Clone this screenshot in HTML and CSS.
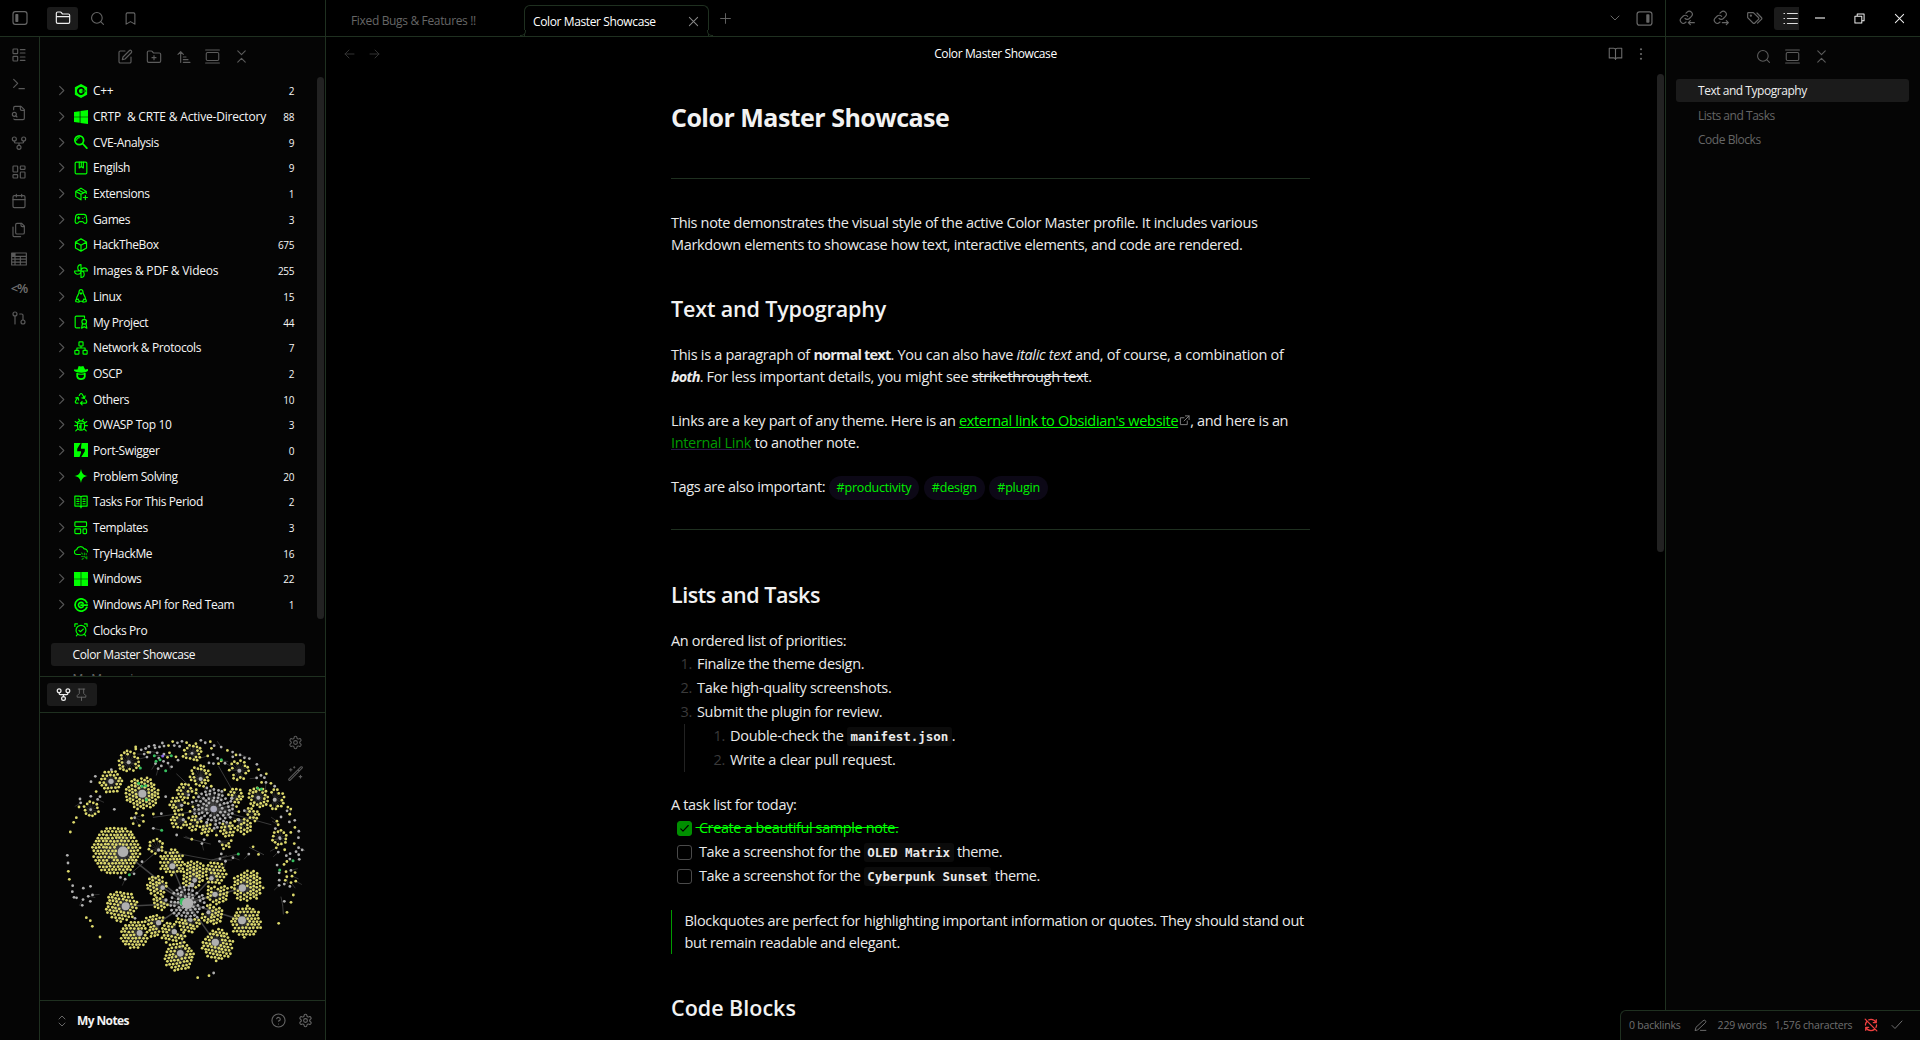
FILE: index.html
```html
<!DOCTYPE html>
<html lang="en">
<head>
<meta charset="utf-8">
<title>Color Master Showcase</title>
<link rel="stylesheet" href="styles.css">
</head>
<body>
<svg class="sprite" aria-hidden="true">
  <symbol id="panel" viewBox="0 0 24 24"><rect x="1.5" y="2.5" width="21" height="19" rx="3.5"/><rect class="fill" x="5" y="6" width="4.5" height="12" rx="1"/></symbol>
  <symbol id="panel-r" viewBox="0 0 24 24"><rect x="1.5" y="2.5" width="21" height="19" rx="3.5"/><rect class="fill" x="14.5" y="6" width="4.5" height="12" rx="1"/></symbol>
  <symbol id="folder" viewBox="0 0 24 24"><path d="M4 20h16a2 2 0 0 0 2-2V8a2 2 0 0 0-2-2h-7.9a2 2 0 0 1-1.7-.9l-.8-1.2A2 2 0 0 0 7.900 3H4a2 2 0 0 0-2 2v13c0 1.100.9 2 2 2ZM2 10h20"/></symbol>
  <symbol id="search" viewBox="0 0 24 24"><circle cx="11" cy="11" r="8.500"/><path d="m21.500 21.500-4.400-4.400"/></symbol>
  <symbol id="bookmark" viewBox="0 0 24 24"><path d="m19 21-7-4-7 4V5a2 2 0 0 1 2-2h10a2 2 0 0 1 2 2v16z"/></symbol>
  <symbol id="list-layout" viewBox="0 0 24 24"><rect x="3" y="3" width="7" height="7" rx="1"/><rect x="3" y="14" width="7" height="7" rx="1"/><path d="M14 4h7M14 9h7M14 15h7M14 20h7"/></symbol>
  <symbol id="terminal" viewBox="0 0 24 24"><path d="m4 17 6-6-6-6M12 19h8"/></symbol>
  <symbol id="file-search" viewBox="0 0 24 24"><path d="M14 2v4a2 2 0 0 0 2 2h4"/><path d="M4.270 21A2 2 0 0 0 6 22h12a2 2 0 0 0 2-2V7l-5-5H6a2 2 0 0 0-2 2v3"/><circle cx="5" cy="14" r="3"/><path d="m9 18-1.500-1.500"/></symbol>
  <symbol id="fork" viewBox="0 0 24 24"><circle cx="12" cy="18.500" r="3"/><circle cx="5" cy="6" r="3"/><circle cx="19" cy="6" r="3"/><path d="M19 9v1c0 1-.6 2-2 2H7c-1.400 0-2-1-2-2V9M12 12v3.500"/></symbol>
  <symbol id="dashboard" viewBox="0 0 24 24"><rect x="3" y="3" width="7" height="9" rx="1"/><rect x="14" y="3" width="7" height="5" rx="1"/><rect x="14" y="12" width="7" height="9" rx="1"/><rect x="3" y="16" width="7" height="5" rx="1"/></symbol>
  <symbol id="calendar" viewBox="0 0 24 24"><rect x="3" y="4" width="18" height="18" rx="2"/><path d="M16 2v4M8 2v4M3 10h18"/></symbol>
  <symbol id="files" viewBox="0 0 24 24"><path d="M20 7h-3a2 2 0 0 1-2-2V2"/><path d="M9 18a2 2 0 0 1-2-2V4a2 2 0 0 1 2-2h7l4 4v10a2 2 0 0 1-2 2Z"/><path d="M3 7.600v12.800A1.600 1.600 0 0 0 4.600 22h9.800"/></symbol>
  <symbol id="table" viewBox="0 0 24 24"><path d="M1 3h22v18H1zM1 8h22M1 12.300h22M1 16.600h22M6 3v18M14 8v13"/><path class="fill" d="M1 3h5v5H1z"/></symbol>
  <symbol id="pull" viewBox="0 0 24 24"><circle cx="18" cy="18" r="3"/><circle cx="6" cy="6" r="3"/><path d="M13 6h3a2 2 0 0 1 2 2v7M6 9v12"/></symbol>
  <symbol id="pen-box" viewBox="0 0 24 24"><path d="M12 3H5a2 2 0 0 0-2 2v14a2 2 0 0 0 2 2h14a2 2 0 0 0 2-2v-7"/><path d="M18.400 2.600a2.100 2.100 0 0 1 3 3L12 15l-4 1 1-4Z"/></symbol>
  <symbol id="folder-plus" viewBox="0 0 24 24"><path d="M4 20h16a2 2 0 0 0 2-2V8a2 2 0 0 0-2-2h-7.900a2 2 0 0 1-1.700-.9l-.8-1.200A2 2 0 0 0 7.900 3H4a2 2 0 0 0-2 2v13c0 1.100.9 2 2 2ZM12 10v6M9 13h6"/></symbol>
  <symbol id="sort" viewBox="0 0 24 24"><path d="m3 8 4-4 4 4M7 4v16M11 12h4M11 16h7M11 20h10"/></symbol>
  <symbol id="gallery" viewBox="0 0 24 24"><path d="M1 1.500h22M1 22.500h22"/><rect x="2" y="5.500" width="20" height="13" rx="2"/></symbol>
  <symbol id="collapse" viewBox="0 0 24 24"><path d="m6 21 6-6 6 6M6 3l6 6 6-6"/></symbol>
  <symbol id="updown" viewBox="0 0 24 24"><path d="m6 16 6 6 6-6M6 8l6-6 6 6"/></symbol>
  <symbol id="chev" viewBox="0 0 24 24"><path d="m8 3 9 9-9 9"/></symbol>
  <symbol id="chev-d" viewBox="0 0 24 24"><path d="m4 8 8 8 8-8"/></symbol>
  <symbol id="x" viewBox="0 0 24 24"><path d="M3 3l18 18M21 3 3 21"/></symbol>
  <symbol id="plus" viewBox="0 0 24 24"><path d="M12 3v18M3 12h18"/></symbol>
  <symbol id="left" viewBox="0 0 24 24"><path d="m12 20-8-8 8-8M4 12h18"/></symbol>
  <symbol id="right" viewBox="0 0 24 24"><path d="m12 4 8 8-8 8M20 12H2"/></symbol>
  <symbol id="book" viewBox="0 0 24 24"><path d="M12 6v15.500M12 6c0-1.500-1-2.500-3-2.500H2v15.500h7c2 0 3 1 3 2.500 0-1.500 1-2.500 3-2.500h7V3.500h-7c-2 0-3 1-3 2.500z"/></symbol>
  <symbol id="dots" viewBox="0 0 24 24"><circle class="fill" cx="12" cy="2.500" r="2.200"/><circle class="fill" cx="12" cy="12" r="2.200"/><circle class="fill" cx="12" cy="21.500" r="2.200"/></symbol>
  <symbol id="link-in" viewBox="0 0 24 24"><path d="M9 12.500a4.500 4.500 0 0 0 6.500.3l3.200-3.200a4.600 4.600 0 0 0-6.500-6.500L10.500 4.800M13 9.500a4.500 4.500 0 0 0-6.500-.5l-3.300 3.300a4.600 4.600 0 0 0 6.500 6.500l.8-.8M23 19h-9M17 16l-3 3 3 3"/></symbol>
  <symbol id="link-out" viewBox="0 0 24 24"><path d="M9 12.500a4.500 4.500 0 0 0 6.500.3l3.200-3.200a4.600 4.600 0 0 0-6.500-6.500L10.500 4.800M13 9.500a4.500 4.500 0 0 0-6.500-.5l-3.300 3.300a4.600 4.600 0 0 0 6.500 6.500l.8-.8M14 19h9M20 16l3 3-3 3"/></symbol>
  <symbol id="tags" viewBox="0 0 24 24"><path d="M1 5v6.500l8 8a2 2 0 0 0 2.800 0l5.400-5.400a2 2 0 0 0 0-2.800L9.500 4H2a1 1 0 0 0-1 1zM15 4.500l6.600 6.700a2 2 0 0 1 0 2.800l-5.800 5.800"/><circle cx="5.800" cy="8.500" r=".8"/></symbol>
  <symbol id="list" viewBox="0 0 24 24"><path d="M7 4h16M7 12h16M7 20h16M1.500 4h1M1.500 12h1M1.500 20h1"/></symbol>
  <symbol id="restore" viewBox="0 0 24 24"><path d="M2 7h15v15H2zM7 7V2h15v15h-5"/></symbol>
  <symbol id="pin" viewBox="0 0 24 24"><path d="M12 17v6M6 2h12M8 2v8l-4 4v3h16v-3l-4-4V2"/></symbol>
  <symbol id="gear" viewBox="0 0 24 24"><path d="M12.200 2h-.4a2 2 0 0 0-2 2v.2a2 2 0 0 1-1 1.700l-.4.300a2 2 0 0 1-2 0l-.2-.1a2 2 0 0 0-2.700.7l-.2.400a2 2 0 0 0 .7 2.700l.2.100a2 2 0 0 1 1 1.700v.5a2 2 0 0 1-1 1.800l-.2.100a2 2 0 0 0-.7 2.700l.2.400a2 2 0 0 0 2.700.7l.2-.1a2 2 0 0 1 2 0l.4.300a2 2 0 0 1 1 1.700v.2a2 2 0 0 0 2 2h.4a2 2 0 0 0 2-2v-.2a2 2 0 0 1 1-1.700l.4-.3a2 2 0 0 1 2 0l.2.100a2 2 0 0 0 2.700-.7l.2-.4a2 2 0 0 0-.7-2.700l-.2-.1a2 2 0 0 1-1-1.800v-.5a2 2 0 0 1 1-1.700l.2-.1a2 2 0 0 0 .7-2.700l-.2-.4a2 2 0 0 0-2.700-.7l-.2.100a2 2 0 0 1-2 0l-.4-.3a2 2 0 0 1-1-1.700V4a2 2 0 0 0-2-2z"/><circle cx="12" cy="12" r="3"/></symbol>
  <symbol id="wand" viewBox="0 0 24 24"><path d="M1.500 20.500 20.500 1.500a1.300 1.300 0 0 1 2 2L3.500 22.500a1.300 1.300 0 0 1-2-2zM16 6l2 2M4.500 4v4M2.500 6h4M20 15v4M18 17h4M10 1v2M9 2h2"/></symbol>
  <symbol id="help" viewBox="0 0 24 24"><circle cx="12" cy="12" r="10.500"/><path d="M9.100 9a3 3 0 0 1 5.800 1c0 2-3 3-3 3M12 17.500v.1"/></symbol>
  <symbol id="pen-line" viewBox="0 0 24 24"><path d="M12 21h10M17 3a2.500 2.500 0 0 1 4 4L7 20l-5 1.500L3.500 16z"/></symbol>
  <symbol id="sync-off" viewBox="0 0 24 24"><path d="M2 2l20 20M21 8h-5M21 3v5c-2-3.500-5-5.500-9-5.500-1.500 0-2.500.3-3.800.8M5 6c-1.500 1.600-2.500 3.700-2.500 6M3 16h5M3 21v-5c2 3.500 5 5.500 9 5.500 2.500 0 4.500-.8 6-2M21.500 12c0 1.500-.3 2.800-1 4"/></symbol>
  <symbol id="check" viewBox="0 0 24 24"><path d="m2 13 6 6L22 4"/></symbol>
  <symbol id="ext" viewBox="0 0 24 24"><path d="M14 2h8v8M22 2 11 13M18 13v8H3V6h8"/></symbol>

  <symbol id="cpp" viewBox="0 0 24 24"><path class="fill" d="M12 0l10.500 5.500v13L12 24 1.500 18.500v-13z"/><path class="cut thick" d="M16.600 9.300A5.300 5.300 0 1 0 16.600 14.700"/><path class="cut" d="M14 12h6"/></symbol>
  <symbol id="win10" viewBox="0 0 24 24"><path class="fill" d="M0 3.400 9.800 2v9.500H0zM11 1.800 24 0v11.500H11zM0 12.600h9.800V22L0 20.600zM11 12.600h13V24l-13-1.800z"/></symbol>
  <symbol id="win11" viewBox="0 0 24 24"><path class="fill" d="M0 0h11.500v11.500H0zM12.500 0H24v11.500H12.500zM0 12.500h11.500V24H0zM12.500 12.500H24V24H12.500z"/></symbol>
  <symbol id="lens" viewBox="0 0 24 24"><circle class="heavy" cx="9" cy="9" r="7.500"/><path class="heavy" d="m15 15 7 7.500"/><path d="M4.500 9A4.500 4.500 0 0 1 9 4.500"/></symbol>
  <symbol id="notebook" viewBox="0 0 24 24"><rect x="2" y="2" width="20" height="20" rx="2"/><path d="M9 2v10l3.500-2.500L16 12V2M12.500 2v7"/></symbol>
  <symbol id="package" viewBox="0 0 24 24"><path d="M21 11V7.500L12 2 3 7.500v9L12 22M3 7.500l9 5 9-5M12 12.500V22M7.500 5l9 5M16 18h7M19.500 14.500v7"/></symbol>
  <symbol id="game" viewBox="0 0 24 24"><path d="M6 10h4M8 8v4M15 11h.1M18 9h.1M17 4H7a4 4 0 0 0-4 3.600C2.500 11 2 14 2 16.500 2 18 3 19.500 5 19.500c1 0 1.500-.5 2-1l1.500-1.500a2 2 0 0 1 1.400-.6h4.200a2 2 0 0 1 1.400.6l1.500 1.500c.5.500 1 1 2 1 2 0 3-1.500 3-3 0-2.500-.5-5.500-1-8.900A4 4 0 0 0 17 4z"/></symbol>
  <symbol id="box" viewBox="0 0 24 24"><path d="M12 1.500 21.500 7v10L12 22.500 2.500 17V7zM2.500 7l9.500 5.500L21.500 7M12 12.500v10"/></symbol>
  <symbol id="fan" viewBox="0 0 24 24"><path d="M12 12V1C8.500 1 6.500 3.500 6.500 6.500S9 12 12 12zM12 12h11c0-3.500-2.500-5.500-5.500-5.500S12 9 12 12zM12 12v11c3.500 0 5.500-2.500 5.500-5.500S15 12 12 12zM12 12H1c0 3.500 2.500 5.500 5.500 5.500S12 15 12 12z"/></symbol>
  <symbol id="tux" viewBox="0 0 24 24"><path d="M12 1C9 1 8.500 3 8.500 6S4 13 4 18M12 1c3 0 3.500 2 3.500 5s4.500 7 4.500 12M10.500 7h3L12 9zM3 19l4-2 2.500 5c-3 1.500-5-.5-6.500-.500zM21 19l-4-2-2.500 5c3 1.500 5-.5 6.500-.500zM9.500 21h5"/></symbol>
  <symbol id="project" viewBox="0 0 24 24"><path d="M10 22H4a2 2 0 0 1-2-2V4a2 2 0 0 1 2-2h14v3"/><circle cx="17.500" cy="11.500" r="4"/><path d="m14.500 15-1.500 7.500 4.500-2.500 4.500 2.500-1.500-7.500"/></symbol>
  <symbol id="network" viewBox="0 0 24 24"><rect x="8.500" y="1.500" width="7" height="7" rx="1"/><rect x="1.500" y="16" width="7" height="6.500" rx="1"/><rect x="15.500" y="16" width="7" height="6.500" rx="1"/><path d="M12 8.500V12M5 16v-4h14v4"/></symbol>
  <symbol id="spy" viewBox="0 0 24 24"><path class="fill" d="M6 6 8 0l4 1 4-1 3 6 5-1v3c-3 4-17 5-24 0V6z"/><path d="M5.500 13v5c1.500 6 11.500 6 13 0v-5" class="heavy"/><path class="fill" d="M5 12c5 1.500 9 1.500 14 0v3H5z"/></symbol>
  <symbol id="recycle" viewBox="0 0 24 24"><path d="M7 19H4a2 2 0 0 1-1.500-3l4-7M11 19h9a2 2 0 0 0 1.500-3l-1.500-2.500M14 16l-3 3 3 3M8 14 7 9l-4.500 1.200M9 6l1.500-2.500a2 2 0 0 1 3.300 0L18 10.500M13.500 10l4.500 1 1-4.500"/></symbol>
  <symbol id="bug" viewBox="0 0 24 24"><path d="M8 2l2 3M16 2l-2 3M6 9c0-2.500 2-4 6-4s6 1.500 6 4v6a6 6 0 0 1-12 0zM6 9h12M12 9v12M6 13H1M23 13h-5M6 9 2 6M18 9l4-3M7 18l-4 4M17 18l4 4M10 13v4"/></symbol>
  <symbol id="port" viewBox="0 0 24 24"><path class="fill" fill-rule="evenodd" d="M0 0h11.500L5.500 10v4H12v2.500L9.500 24H0zM13 0h11v24H12.500l6-10v-4H12V7.500z"/></symbol>
  <symbol id="spark" viewBox="0 0 24 24"><path class="fill" d="M12 0c1.500 8 4 10.500 11.500 12C16 13.500 13.500 16 12 24 10.500 16 8 13.500.5 12 8 10.500 10.500 8 12 0z"/></symbol>
  <symbol id="reader" viewBox="0 0 24 24"><path d="M12 4v18M12 4c0-1-1-2-3-2H1.500v17H9c2 0 3 1 3 2.500 0-1.500 1-2.500 3-2.500h7.500V2H15c-2 0-3 1-3 2zM5 7h3.500M5 11h3.500M5 15h3.500M15.500 7H19M15.500 11H19M15.500 15H19"/></symbol>
  <symbol id="template" viewBox="0 0 24 24"><rect x="1.500" y="1.500" width="20" height="8" rx="1.500"/><rect x="1.500" y="13.500" width="10" height="8" rx="1.500"/><rect x="15.500" y="13.500" width="6" height="8" rx="1.500"/></symbol>
  <symbol id="cloud" viewBox="0 0 24 24"><path d="M11 14.500H5A4 4 0 0 1 4.500 6.500 7 7 0 0 1 17.500 5 5 5 0 0 1 23 10"/><path class="faint" d="M13 12l2 2M13 18h3M18 12v3M18 18l4 4M22 18v4M14 23l2-2M21 13v2"/></symbol>
  <symbol id="cring" viewBox="0 0 24 24"><path class="heavy" d="M22 8A10.500 10.500 0 1 0 22 16"/><path class="heavy" d="M15.500 9A4.500 4.500 0 1 0 15.500 15"/><path class="heavy" d="M12 12h11"/></symbol>
  <symbol id="alarm" viewBox="0 0 24 24"><circle cx="12" cy="12.500" r="8.500"/><path d="M1.500 6V1.500H6M22.500 6V1.500H18M4 22l2-2.500M20 22l-2-2.500M8.500 12.500l2.500 2.500 5-4.500"/></symbol>
</svg>

<div class="app">
  <header class="titlebar">
    <div class="tb-left">
      <svg class="i16"><use href="#panel"/></svg>
      <span class="tb-tab on"><svg class="i16"><use href="#folder"/></svg></span>
      <span class="tb-tab"><svg class="i15"><use href="#search"/></svg></span>
      <span class="tb-tab"><svg class="i15"><use href="#bookmark"/></svg></span>
    </div>
    <div class="tb-main">
      <span class="doc-tab"><span class="ui">Fixed Bugs &amp; Features !!</span></span>
      <span class="doc-tab active"><span class="ui">Color Master Showcase</span><svg class="i11"><use href="#x"/></svg></span>
      <svg class="i13 new-tab"><use href="#plus"/></svg>
      <svg class="i12 chev-menu"><use href="#chev-d"/></svg>
      <svg class="i17"><use href="#panel-r"/></svg>
    </div>
    <div class="tb-right">
      <div class="tb-icons">
        <svg class="i16"><use href="#link-in"/></svg>
        <svg class="i16"><use href="#link-out"/></svg>
        <svg class="i16"><use href="#tags"/></svg>
      </div>
      <span class="outline-tab"><svg class="i15"><use href="#list"/></svg></span>
      <div class="win">
        <i class="min"></i>
        <svg class="i11"><use href="#restore"/></svg>
        <svg class="i11"><use href="#x"/></svg>
      </div>
    </div>
  </header>

  <nav class="ribbon">
    <svg class="i16"><use href="#list-layout"/></svg>
    <svg class="i16"><use href="#terminal"/></svg>
    <svg class="i16"><use href="#file-search"/></svg>
    <svg class="i16"><use href="#fork"/></svg>
    <svg class="i16"><use href="#dashboard"/></svg>
    <svg class="i16"><use href="#calendar"/></svg>
    <svg class="i16"><use href="#files"/></svg>
    <svg class="i16"><use href="#table"/></svg>
    <span class="tpl">&lt;%</span>
    <svg class="i16"><use href="#pull"/></svg>
  </nav>

  <aside class="sidebar">
    <div class="tools">
      <svg class="i16"><use href="#pen-box"/></svg>
      <svg class="i16"><use href="#folder-plus"/></svg>
      <svg class="i16"><use href="#sort"/></svg>
      <svg class="i15"><use href="#gallery"/></svg>
      <svg class="i15"><use href="#collapse"/></svg>
    </div>
    <div class="tree-wrap">
      <ul class="tree">
        <li><svg class="tw"><use href="#chev"/></svg><svg class="fi"><use href="#cpp"/></svg><span class="ui">C++</span><em>2</em></li>
        <li><svg class="tw"><use href="#chev"/></svg><svg class="fi"><use href="#win10"/></svg><span class="ui wide">CRTP&nbsp; &amp; CRTE &amp; Active-Directory</span><em>88</em></li>
        <li><svg class="tw"><use href="#chev"/></svg><svg class="fi"><use href="#lens"/></svg><span class="ui">CVE-Analysis</span><em>9</em></li>
        <li><svg class="tw"><use href="#chev"/></svg><svg class="fi"><use href="#notebook"/></svg><span class="ui">Engilsh</span><em>9</em></li>
        <li><svg class="tw"><use href="#chev"/></svg><svg class="fi"><use href="#package"/></svg><span class="ui">Extensions</span><em>1</em></li>
        <li><svg class="tw"><use href="#chev"/></svg><svg class="fi"><use href="#game"/></svg><span class="ui">Games</span><em>3</em></li>
        <li><svg class="tw"><use href="#chev"/></svg><svg class="fi"><use href="#box"/></svg><span class="ui">HackTheBox</span><em>675</em></li>
        <li><svg class="tw"><use href="#chev"/></svg><svg class="fi"><use href="#fan"/></svg><span class="ui wide">Images &amp; PDF &amp; Videos</span><em>255</em></li>
        <li><svg class="tw"><use href="#chev"/></svg><svg class="fi"><use href="#tux"/></svg><span class="ui">Linux</span><em>15</em></li>
        <li><svg class="tw"><use href="#chev"/></svg><svg class="fi"><use href="#project"/></svg><span class="ui">My Project</span><em>44</em></li>
        <li><svg class="tw"><use href="#chev"/></svg><svg class="fi"><use href="#network"/></svg><span class="ui">Network &amp; Protocols</span><em>7</em></li>
        <li><svg class="tw"><use href="#chev"/></svg><svg class="fi"><use href="#spy"/></svg><span class="ui">OSCP</span><em>2</em></li>
        <li><svg class="tw"><use href="#chev"/></svg><svg class="fi"><use href="#recycle"/></svg><span class="ui">Others</span><em>10</em></li>
        <li><svg class="tw"><use href="#chev"/></svg><svg class="fi"><use href="#bug"/></svg><span class="ui">OWASP Top 10</span><em>3</em></li>
        <li><svg class="tw"><use href="#chev"/></svg><svg class="fi"><use href="#port"/></svg><span class="ui">Port-Swigger</span><em>0</em></li>
        <li><svg class="tw"><use href="#chev"/></svg><svg class="fi"><use href="#spark"/></svg><span class="ui">Problem Solving</span><em>20</em></li>
        <li><svg class="tw"><use href="#chev"/></svg><svg class="fi"><use href="#reader"/></svg><span class="ui">Tasks For This Period</span><em>2</em></li>
        <li><svg class="tw"><use href="#chev"/></svg><svg class="fi"><use href="#template"/></svg><span class="ui">Templates</span><em>3</em></li>
        <li><svg class="tw"><use href="#chev"/></svg><svg class="fi"><use href="#cloud"/></svg><span class="ui">TryHackMe</span><em>16</em></li>
        <li><svg class="tw"><use href="#chev"/></svg><svg class="fi"><use href="#win11"/></svg><span class="ui">Windows</span><em>22</em></li>
        <li><svg class="tw"><use href="#chev"/></svg><svg class="fi"><use href="#cring"/></svg><span class="ui">Windows API for Red Team</span><em>1</em></li>
        <li><i class="tw"></i><svg class="fi"><use href="#alarm"/></svg><span class="ui">Clocks Pro</span></li>
        <li class="file sel"><span class="ui">Color Master Showcase</span></li>
        <li class="file dim"><span class="ui">My Memories</span></li>
      </ul>
      <i class="thumb"></i>
    </div>
    <div class="graph-tabs"><span class="graph-tab"><svg class="i15 lit"><use href="#fork"/></svg><svg class="i13"><use href="#pin"/></svg></span></div>
    <div class="graph">
      <svg id="graph" viewBox="0 132 855 861"></svg>
      <div class="graph-tools"><svg class="i15"><use href="#gear"/></svg><svg class="i15"><use href="#wand"/></svg></div>
    </div>
    <footer class="vault">
      <svg class="i12"><use href="#updown"/></svg><strong>My Notes</strong>
      <svg class="i15"><use href="#help"/></svg><svg class="i15"><use href="#gear"/></svg>
    </footer>
  </aside>

  <main class="main">
    <div class="view-head">
      <div class="nav"><svg class="i12"><use href="#left"/></svg><svg class="i12"><use href="#right"/></svg></div>
      <span class="ui">Color Master Showcase</span>
      <div class="acts"><svg class="i15"><use href="#book"/></svg><svg class="i12"><use href="#dots"/></svg></div>
    </div>
    <div class="scroll">
      <article>
        <h1>Color Master Showcase</h1>
        <hr>
        <p>This note demonstrates the visual style of the active Color Master profile. It includes various<br>Markdown elements to showcase how text, interactive elements, and code are rendered.</p>
        <h2 class="h-text">Text and Typography</h2>
        <p>This is a paragraph of <strong>normal text</strong>. You can also have <i>italic text</i> and, of course, a combination of<br><strong><i>both</i></strong>. For less important details, you might see <s>strikethrough text</s>.</p>
        <p>Links are a key part of any theme. Here is an <a class="ext">external link to Obsidian's website</a><svg class="ext-i"><use href="#ext"/></svg>, and here is an<br><a class="int">Internal Link</a> to another note.</p>
        <p class="tags">Tags are also important: <span class="tag">#productivity</span><span class="tag">#design</span><span class="tag">#plugin</span></p>
        <hr class="hr2">
        <h2 class="h-lists">Lists and Tasks</h2>
        <p>An ordered list of priorities:</p>
        <ol>
          <li>Finalize the theme design.</li>
          <li>Take high-quality screenshots.</li>
          <li>Submit the plugin for review.
            <ol><li>Double-check the <code>manifest.json</code>.</li><li>Write a clear pull request.</li></ol>
          </li>
        </ol>
        <p>A task list for today:</p>
        <ul class="tasks">
          <li class="done"><span class="cb"><svg class="i9"><use href="#check"/></svg></span><s>&nbsp;Create a beautiful sample note.</s></li>
          <li><span class="cb"></span><span>&nbsp;Take a screenshot for the <code>OLED Matrix</code> theme.</span></li>
          <li><span class="cb"></span><span>&nbsp;Take a screenshot for the <code>Cyberpunk Sunset</code> theme.</span></li>
        </ul>
        <blockquote>Blockquotes are perfect for highlighting important information or quotes. They should stand out<br>but remain readable and elegant.</blockquote>
        <h2 class="h-code">Code Blocks</h2>
      </article>
      <i class="thumb"></i>
    </div>
  </main>

  <aside class="outline">
    <div class="tools">
      <svg class="i15"><use href="#search"/></svg>
      <svg class="i15"><use href="#gallery"/></svg>
      <svg class="i15"><use href="#collapse"/></svg>
    </div>
    <ul>
      <li class="on"><span class="ui">Text and Typography</span></li>
      <li><span class="ui">Lists and Tasks</span></li>
      <li><span class="ui">Code Blocks</span></li>
    </ul>
  </aside>

  <div class="status">
    <span>0 backlinks</span><svg class="i13"><use href="#pen-line"/></svg><span>229 words</span><span>1,576 characters</span><svg class="i14 red"><use href="#sync-off"/></svg><svg class="i12"><use href="#check"/></svg>
  </div>
</div>
<script src="graph.js"></script>
</body>
</html>
```
FILE: styles.css
```css
* { box-sizing: border-box; margin: 0; padding: 0; }
:root {
  --line: #1f3020;
  --side: #050505;
  --hover: #1b1b1b;
  --green: #00ff00;
}
body {
  width: 1920px; height: 1040px; overflow: hidden;
  background: #000; color: #eee;
  font-family: "Open Sans", "Noto Sans", sans-serif;
  font-size: 12px;
}
ul, ol { list-style: none; }
.sprite { display: none; }
svg { flex: none; fill: none; stroke: currentColor; stroke-width: 1.75; stroke-linecap: round; stroke-linejoin: round; overflow: visible; }
.fill { fill: currentColor; stroke: none; }
.heavy { stroke-width: 3; }
.cut { stroke: #050505; }
.thick { stroke-width: 3.2; }
.faint { opacity: 0.6; }
.i9 { width: 9px; height: 9px; stroke-width: 3; }
.i11 { width: 11px; height: 11px; stroke-width: 2.2; }
.i12 { width: 12px; height: 12px; stroke-width: 2; }
.i13 { width: 13px; height: 13px; }
.i14 { width: 14px; height: 14px; }
.i15 { width: 15px; height: 15px; }
.i16 { width: 16px; height: 16px; }
.i17 { width: 17px; height: 17px; }
.ui { font-size: 12px; letter-spacing: -0.38px; white-space: pre; }
.ui.wide { letter-spacing: -0.19px; }

.app {
  position: relative;
  width: 1920px; height: 1040px; overflow: hidden;
  display: grid;
  grid-template: 37px 1003px / 40px 286px 1340px 254px;
}
.titlebar { grid-column: 1 / -1; display: flex; border-bottom: 1px solid var(--line); color: #666; }
.tb-left { width: 326px; display: flex; align-items: center; padding-left: 12px; border-right: 1px solid var(--line); }
.tb-tab { width: 31px; height: 23px; margin-right: 2px; display: flex; align-items: center; justify-content: center; border-radius: 3px; }
.tb-tab.on { margin-left: 19px; margin-right: 4px; background: var(--hover); color: #eee; }
.tb-main { width: 1340px; display: flex; align-items: center; border-right: 1px solid var(--line); padding-right: 12px; }
.doc-tab { width: 185px; height: 31px; display: flex; align-items: center; padding: 4px 0 0 25px; color: #666; }
.doc-tab .ui { letter-spacing: -0.34px; }
.doc-tab.active {
  position: relative; align-self: flex-end; margin-left: 13px; padding: 0 9px 0 8px; justify-content: space-between;
  border: 1px solid var(--line); border-bottom: 0; border-radius: 6px 6px 0 0; color: #fff;
}
.doc-tab.active .ui { letter-spacing: -0.38px; }
.doc-tab.active svg { color: #888; }
.doc-tab.active::before, .doc-tab.active::after {
  content: ""; position: absolute; bottom: 0; width: 5px; height: 5px; border-bottom: 1px solid var(--line); background: #000;
}
.doc-tab.active::before { left: -5px; border-right: 1px solid var(--line); border-bottom-right-radius: 5px; }
.doc-tab.active::after { right: -5px; border-left: 1px solid var(--line); border-bottom-left-radius: 5px; }
.new-tab { margin-left: 10px; }
.chev-menu { margin-left: auto; margin-right: 15px; }
.tb-right { width: 254px; display: flex; align-items: center; }
.tb-icons { display: flex; gap: 18px; padding-left: 13px; }
.outline-tab { width: 25px; height: 23px; margin-left: 11px; padding-left: 9px; display: flex; align-items: center; background: var(--hover); border-radius: 3px 0 0 3px; color: #ddd; }
.win { flex: 1; display: flex; align-items: center; justify-content: space-between; padding: 0 15px 0 16px; color: #eee; }
.min { width: 10px; height: 2px; background: #888; }

.ribbon { background: var(--side); border-right: 1px solid var(--line); display: flex; flex-direction: column; align-items: center; gap: 13.200px; padding: 10px 1px 0 0; color: #5a5a5a; }
.tpl { height: 16px; line-height: 15px; font-size: 13px; letter-spacing: -1px; font-weight: 600; color: #707070; }

.sidebar { background: var(--side); border-right: 1px solid var(--line); display: flex; flex-direction: column; height: 1003px; }
.tools { height: 39px; display: flex; align-items: center; justify-content: center; gap: 13.500px; color: #5c5c5c; }
.tree-wrap { height: 601px; position: relative; overflow: hidden; border-bottom: 1px solid var(--line); }
.tree { padding: 2px 20px 0 11px; }
.tree li { height: 25.700px; display: flex; align-items: center; color: #f6f6f6; padding-right: 11px; }
.tw { width: 11px; height: 11px; margin: 0 7px 0 5px; color: #555; stroke-width: 2.500; }
.fi { width: 14px; height: 14px; margin-right: 5px; color: var(--green); stroke-width: 2; }
.tree em { margin-left: auto; font-style: normal; font-size: 10px; letter-spacing: -0.4px; position: relative; top: 0.5px; }
.tree li.file { height: 23px; padding-left: 21.500px; border-radius: 3px; }
.tree li.sel { background: var(--hover); }
.tree li.dim { margin-top: 1px; color: #666; }
.thumb { position: absolute; right: 1px; top: 0; width: 7px; border-radius: 4px; background: #222; }
.tree-wrap .thumb { top: 1px; height: 542px; }
.graph-tabs { height: 36px; padding: 6px 7px; border-bottom: 1px solid var(--line); }
.graph-tab { width: 50px; height: 23px; display: flex; align-items: center; gap: 4px; padding-left: 8.500px; border-radius: 3px; background: var(--hover); color: #666; }
.lit { color: #eee; stroke-width: 2; }
.graph { position: relative; height: 288px; border-bottom: 1px solid var(--line); }
#graph { display: block; width: 285px; height: 287px; stroke: none; }
.graph-tools { position: absolute; top: 22px; left: 247.500px; display: flex; flex-direction: column; gap: 16px; color: #5a5a5a; }
.vault { flex: 1; display: flex; align-items: center; padding: 0 12px 0 16px; color: #666; }
.vault strong { margin: 0 auto 0 9px; font-size: 12px; font-weight: 700; letter-spacing: -0.6px; color: #f2f2f2; }
.vault svg + svg { margin-left: 12px; }

.main { display: flex; flex-direction: column; border-right: 1px solid var(--line); height: 1003px; }
.view-head { height: 33px; display: grid; grid-template-columns: 1fr auto 1fr; align-items: center; color: #fff; }
.nav { display: flex; gap: 14px; padding-left: 17px; color: #333; }
.acts { display: flex; justify-content: flex-end; gap: 12px; padding-right: 18px; color: #6a6a6a; align-items: center; }
.scroll { position: relative; flex: 1; overflow: hidden; }
.scroll .thumb { top: 4px; height: 478px; }

article { width: 639px; margin: 29px 0 0 345px; font-size: 14.500px; line-height: 22px; letter-spacing: -0.33px; white-space: nowrap; color: #eaeaea; }
h1 { font-size: 25px; line-height: 36px; font-weight: 700; letter-spacing: -0.52px; color: #f2f2f2; }
h2 { font-size: 21.500px; line-height: 30px; font-weight: 600; margin-bottom: 20px; color: #f2f2f2; }
hr { border: 0; height: 1px; background: #1f3020; margin: 43px 0 33px; }
.hr2 { margin: 31px 0 50px; }
.h-text { margin-top: 38px; letter-spacing: -0.15px; }
.h-text + p { letter-spacing: -0.29px; }
.h-lists { letter-spacing: -0.45px; }
.h-code { margin-top: 39px; letter-spacing: 0; }
p + p, ol + p { margin-top: 22px; }
article strong { font-weight: 700; letter-spacing: -0.8px; }
.ext { color: var(--green); text-decoration: underline; }
.ext-i { width: 11px; height: 11px; margin: 0 0 0 1px; color: #888; vertical-align: 0; stroke-width: 2; }
.int { color: #009a00; text-decoration: underline; text-decoration-color: #2a1745; }
.tags { height: 22px; letter-spacing: -0.38px; }
.tag { display: inline-block; height: 24px; line-height: 23px; margin: -1px 4.500px -1px 0; padding: 0 8px; border-radius: 12px; background: #0c0816; color: #00f000; font-size: 12.500px; letter-spacing: -0.2px; }
ol { counter-reset: n; padding-left: 26px; }
ol li { counter-increment: n; line-height: 24px; position: relative; }
ol li::before { content: counter(n) "."; position: absolute; right: 100%; margin-right: 5px; color: #3a3a3a; }
ol ol { margin-left: -13px; padding-left: 45px; border-left: 1px solid #222; letter-spacing: -0.28px; }
code { font: 700 12.500px "DejaVu Sans Mono", monospace; letter-spacing: 0; background: #0b0b0b; border-radius: 3px; padding: 2px 3.500px; }
.tasks { letter-spacing: -0.39px; }
.tasks li { display: flex; align-items: center; height: 24px; padding-left: 6px; }
.cb { width: 15px; height: 15px; margin-right: 3.500px; border: 1px solid #4a4a4a; border-radius: 3px; display: flex; align-items: center; justify-content: center; }
.done { color: var(--green); }
.done .cb { background: #008f00; border-color: #008f00; color: #000; }
blockquote { margin-top: 22px; padding-left: 12.500px; border-left: 1px solid #009a00; letter-spacing: -0.31px; }

.outline { background: var(--side); height: 1003px; }
.outline .tools { gap: 14px; padding-right: 1px; }
.outline ul { padding: 3px 11px 0 10px; }
.outline li { height: 23px; margin-bottom: 1.600px; padding-left: 22px; display: flex; align-items: center; border-radius: 3px; color: #666; }
.outline .ui { letter-spacing: -0.46px; }
.outline li.on { background: var(--hover); color: #eee; }

.status {
  position: absolute; right: 0; bottom: 0; width: 300px; height: 30px; display: flex; align-items: center;
  padding: 0 0 1px 8px; background: var(--side); border: 1px solid var(--line); border-width: 1px 0 0 1px; border-top-left-radius: 6px;
  font-size: 10.500px; letter-spacing: -0.2px; color: #707070;
}
.status span { white-space: nowrap; }
.status .i13 { margin: 0 11px 0 13px; }
.status span + span { margin-left: 8px; }
.status .red { color: #f04040; margin: 0 13px 0 12px; stroke-width: 2.200; }
```
FILE: graph.js
```js
(function () {
  var svg = document.getElementById("graph");
  var Y = "#dcd86c", G = "#b0b0b0", E = "#38c060";
  var seed = 7;
  function rnd() { seed = (seed * 16807) % 2147483647; return seed / 2147483647; }
  var dots = [], lines = [], hubs = [];
  function free(x, y, d) {
    return dots.every(function (p) { return Math.hypot(p[0] - x, p[1] - y) >= d; });
  }
  function dot(x, y, c, d) { if (free(x, y, d || 9)) { dots.push([x, y, c]); return true; } return false; }
  function line(a, b, c, d, w) { lines.push([a, b, c, d, w || 1.5]); }

  // Discs of leaves around a hub: cx, cy, radius, hub x, hub y, hub radius, inner gap
  [[228,545,73,249,548,16,0],[307,373,50,307,374,12,0],[245,710,48,257,712,12,0],[283,798,42,299,792,9,0],
   [418,862,47,421,853,10,0],[532,828,48,526,820,11,0],[618,758,48,606,754,12,0],[622,650,48,607,657,11,0],
   [395,580,39,397,592,9,0],[350,650,30,368,656,7,0],[460,616,40,464,634,7,0],[525,612,36,514,628,7,0],
   [532,672,38,525,676,8,0],[516,736,33,505,730,6,0],[447,757,34,452,753,6,0],[402,795,39,403,788,8,0],
   [342,771,38,356,761,8,0],[362,700,28,378,693,5,0],
   [213,338,35,213,337,8,18],[266,278,33,266,280,6,20],[480,320,32,482,330,6,18],[597,304,30,598,305,6,20],
   [655,385,32,655,386,6,18],[704,391,31,704,392,6,20],[719,506,28,719,506,4,18],[154,420,28,152,422,4,18],
   [293,452,20,284,446,4,12],[348,532,26,356,543,5,16],[455,250,29,456,253,4,18],[434,366,24,446,378,4,10],
   [412,405,24,425,409,5,10],[415,456,26,430,452,5,10],[587,380,26,575,388,5,10],[612,472,26,596,452,5,8],
   [635,437,22,613,425,4,4],[563,482,28,560,460,4,4],[555,520,20,538,517,4,10],[498,480,20,500,460,4,0],[462,462,24,480,450,4,4]
  ].forEach(function (c) {
    hubs.push([c[3], c[4], c[5], G]);
    var rot = rnd() * 1.05, s = 11, R = c[2];
    for (var v = -9; v <= 9; v++) for (var u = -9; u <= 9; u++) {
      var hx = (u + (v & 1) / 2) * s + (rnd() - .5) * 2.2, hy = v * s * .866 + (rnd() - .5) * 2.2, r = Math.hypot(hx, hy);
      if (r > R || r < c[6]) continue;
      var x = c[0] + hx * Math.cos(rot) - hy * Math.sin(rot), y = c[1] + hx * Math.sin(rot) + hy * Math.cos(rot);
      if (Math.hypot(x - c[3], y - c[4]) < c[5] + 4 || Math.hypot(x - 443, y - 703) < 52) continue;
      if (dot(x, y, Y, 8.4)) line(c[3], c[4], x, y);
    }
  });
  // Hubs whose neighbours are mostly notes rather than leaves
  [[443,703,52,20,10],[521,420,58,24,11]].forEach(function (c) {
    for (var r = c[3]; r <= c[2]; r += c[4])
      for (var a = 0, n = Math.floor(r * 6.28 / 12.5); a < n; a++) {
        var t = a / n * 6.283 + r, x = c[0] + r * Math.cos(t) + (rnd() - .5) * 4, y = c[1] + r * Math.sin(t) + (rnd() - .5) * 4;
        if (dot(x, y, G, 8.5)) line(c[0], c[1], x, y, 2);
      }
  });
  for (var t = 0; t < 60; t++) {
    var q = t / 60 * 6.283, rr = 60 + rnd() * 20, ux = 521 + rr * Math.cos(q), uy = 420 + rr * Math.sin(q);
    if (dot(ux, uy, t % 3 ? Y : G, 9)) line(521, 420, ux, uy);
  }
  [[443,703,249,548],[443,703,257,712],[443,703,356,761],[443,703,397,592],[443,703,526,820],[443,703,606,754],[443,703,607,657],
   [443,703,368,656],[443,703,421,853],[443,703,464,634],[443,703,525,676],[443,703,514,628]].forEach(function (l) { line(l[0], l[1], l[2], l[3], 4.5); });
  [[356,543,516,573],[356,543,268,617],[516,573,595,555],[516,573,560,560],[516,573,575,573],[521,420,410,315],[521,420,693,467],
   [598,400,536,292],[432,505,511,525],[340,478,365,484],[343,260,395,260],[628,535,671,557],[521,420,340,445],[728,708,723,684],[728,708,730,735]]
    .forEach(function (l) { line(l[0], l[1], l[2], l[3], 2.5); });

  // Loose notes: cx, cy, half width, half height, count, share of leaves
  [[370,255,62,48,42,.4],[560,250,60,38,40,.5],[150,375,34,52,16,.3],[135,680,30,36,15,.05],[262,622,30,18,16,0],
   [560,562,24,16,14,0],[740,500,42,90,62,.3],[740,610,34,60,40,.35],[680,325,36,18,20,.3],[530,275,30,20,12,.3],[480,515,32,12,5,.4],[645,545,28,14,8,.4]]
    .forEach(function (s) {
      for (var i = 0; i < s[4]; i++) {
        var a = rnd() * 6.283, r = Math.sqrt(rnd()), x = s[0] + s[2] * r * Math.cos(a), y = s[1] + s[3] * r * Math.sin(a);
        if (Math.hypot(x - 432, y - 565) < 352 && dot(x, y, rnd() < s[5] ? Y : G, 11) && i % 3 === 0)
          line(x, y, x + 20 * Math.cos(a), y + 20 * Math.sin(a), 2);
      }
    });
  // Sparse outer rim, from the top left round to the right edge
  for (var k = -114; k < 2; k += 2.3) {
    var w = k * Math.PI / 180, R = 338 + rnd() * 18;
    dot(432 + R * Math.cos(w), 565 + R * Math.sin(w), rnd() < .3 ? Y : G, 10);
  }
  [[287,234,1],[343,229,0],[324,250,1],[166,322,0],[153,338,0],[214,302,0],[180,383,0],[120,390,0],[117,414,1],[109,446,1],[101,460,1],[91,489,1],
   [82,559,0],[84,582,0],[85,607,1],[88,631,1],[98,650,0],[97,668,0],[102,685,0],[139,746,1],[151,755,1],[157,772,1],[180,804,1],[285,748,0],
   [473,926,1],[507,920,1],[521,912,0],[223,421,0],[377,383,0],[340,478,0],[410,498,0],[716,763,1],[741,730,1],[753,700,1],[760,678,1],[733,697,0],[306,578,0],[340,435,1],[364,434,0]]
    .forEach(function (p) { dot(p[0], p[1], p[2] ? Y : G, 5); });
  [[343,260],[394,260],[360,272],[348,277],[301,297],[377,305],[296,343],[306,352],[317,350],[319,392],[544,272],[653,358],[664,360],[595,555],[268,617],[759,575],[719,603],[365,484]]
    .forEach(function (p) { hubs.push([p[0], p[1], 4.5, E]); });
  hubs.push([368, 261, 4.5, "#8a68e8"], [430, 698, 11, E], [443, 703, 17, G], [521, 420, 10, "#a8a8b8"], [456, 648, 7, G]);

  svg.innerHTML = lines.map(function (l) {
    return '<path d="M' + l[0] + ' ' + l[1] + 'L' + l[2].toFixed(1) + ' ' + l[3].toFixed(1) + '" stroke="#444" stroke-width="' + l[4] + '"/>';
  }).join("") + dots.map(function (d) {
    return '<circle cx="' + d[0].toFixed(1) + '" cy="' + d[1].toFixed(1) + '" r="4.2" fill="' + d[2] + '"/>';
  }).join("") + hubs.map(function (h) {
    return '<circle cx="' + h[0] + '" cy="' + h[1] + '" r="' + h[2] + '" fill="' + h[3] + '"/>';
  }).join("");
})();
```
